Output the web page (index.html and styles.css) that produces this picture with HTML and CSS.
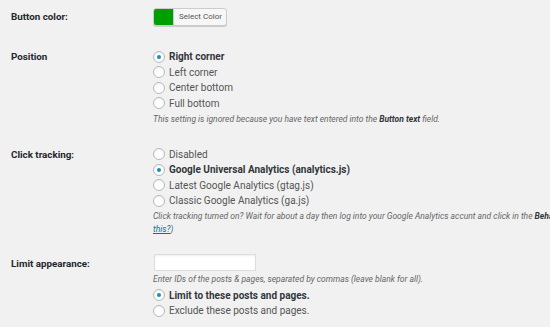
FILE: index.html
```html
<!DOCTYPE html>
<html lang="en">
<head>
  <meta charset="UTF-8" />
  <title>Button Settings</title>
  <link rel="stylesheet" href="styles.css">
</head>
<body>
  <div class="settings">

    <div class="row row-color">
      <div class="label">Button color:</div>
      <div class="field">
        <button class="color-btn" type="button">
          <span class="swatch"></span>
          <span class="color-text">Select Color</span>
        </button>
      </div>
    </div>

    <div class="row row-position">
      <div class="label">Position</div>
      <div class="field">
        <label class="opt checked"><input type="radio" name="pos" checked> Right corner</label>
        <label class="opt"><input type="radio" name="pos"> Left corner</label>
        <label class="opt"><input type="radio" name="pos"> Center bottom</label>
        <label class="opt"><input type="radio" name="pos"> Full bottom</label>
        <p class="note">This setting is ignored because you have text entered into the <b>Button text</b> field.</p>
      </div>
    </div>

    <div class="row row-tracking">
      <div class="label">Click tracking:</div>
      <div class="field">
        <label class="opt"><input type="radio" name="track"> Disabled</label>
        <label class="opt checked"><input type="radio" name="track" checked> Google Universal Analytics (analytics.js)</label>
        <label class="opt"><input type="radio" name="track"> Latest Google Analytics (gtag.js)</label>
        <label class="opt"><input type="radio" name="track"> Classic Google Analytics (ga.js)</label>
        <p class="note">Click tracking turned on? Wait for about a day then log into your Google Analytics accunt and click in the <b>Behavior &gt; Events</b> section. (<a href="#">What is<br>this?</a>)</p>
      </div>
    </div>

    <div class="row row-limit">
      <div class="label">Limit appearance:</div>
      <div class="field">
        <input class="text-input" type="text">
        <p class="note">Enter IDs of the posts &amp; pages, separated by commas (leave blank for all).</p>
        <label class="opt checked"><input type="radio" name="limit" checked> Limit to these posts and pages.</label>
        <label class="opt"><input type="radio" name="limit"> Exclude these posts and pages.</label>
      </div>
    </div>

  </div>
</body>
</html>
```

FILE: styles.css
```css
html, body {
  margin: 0;
  overflow: hidden;
}

body {
  font-family: Roboto, "Liberation Sans", Arial, sans-serif;
  font-size: 10px;
  background: #f1f1f1;
  color: #23282d;
  width: 550px;
  height: 327px;
}

.settings {
  padding: 8px 0 0 11px;
  width: 760px;
}

.row {
  display: grid;
  grid-template-columns: 142px 1fr;
}

.label {
  font-weight: bold;
  font-size: 9.8px;
  line-height: 15.5px;
}

.row-color .label {
  line-height: 18px;
}

.row-position {
  margin-top: 23px;
}

.row-tracking {
  margin-top: 21px;
}

.row-limit {
  margin-top: 17.5px;
}

.row-limit .label {
  line-height: 17px;
  padding-top: 1px;
}

/* color picker button */
.color-btn {
  display: flex;
  align-items: stretch;
  height: 18px;
  padding: 0;
  border: 1px solid #ccc;
  border-radius: 3px;
  background: #f7f7f7;
  box-shadow: 0 1px 0 #ccc;
  overflow: hidden;
  cursor: pointer;
  font-family: inherit;
}

.swatch {
  width: 19px;
  background: #009f00;
  border-right: 1px solid #ccc;
}

.color-text {
  font-size: 8px;
  color: #555;
  line-height: 16px;
  padding: 0 4px 0 5px;
}

/* radio rows */
.opt {
  display: flex;
  align-items: center;
  line-height: 15.5px;
  height: 15.5px;
  color: #555;
  white-space: nowrap;
}

.opt.checked {
  font-weight: bold;
  color: #32373c;
}

.opt input {
  appearance: none;
  -webkit-appearance: none;
  width: 12px;
  height: 12px;
  margin: 0 4px 0 0;
  border: 1px solid #b4b9be;
  border-radius: 50%;
  background: #fff;
  box-shadow: inset 0 1px 2px rgba(0, 0, 0, 0.07);
  box-sizing: border-box;
  position: relative;
  flex: none;
}

.opt input:checked::before {
  content: "";
  position: absolute;
  left: 3px;
  top: 3px;
  width: 4px;
  height: 4px;
  border-radius: 50%;
  background: #1e8cbe;
}

.note {
  margin: 1.5px 0 0;
  font-size: 8.5px;
  font-style: italic;
  line-height: 13px;
  color: #666;
  white-space: nowrap;
}

.note b {
  color: #32373c;
}

.note a {
  color: #0073aa;
}

.row-limit .note {
  margin: 2.5px 0 1.5px;
}

.text-input {
  display: block;
  width: 102px;
  height: 17px;
  margin: 0 0 0 1px;
  border: 1px solid #ddd;
  background: #fff;
  box-shadow: inset 0 1px 2px rgba(0, 0, 0, 0.07);
  box-sizing: border-box;
  padding: 0 4px;
}
```
